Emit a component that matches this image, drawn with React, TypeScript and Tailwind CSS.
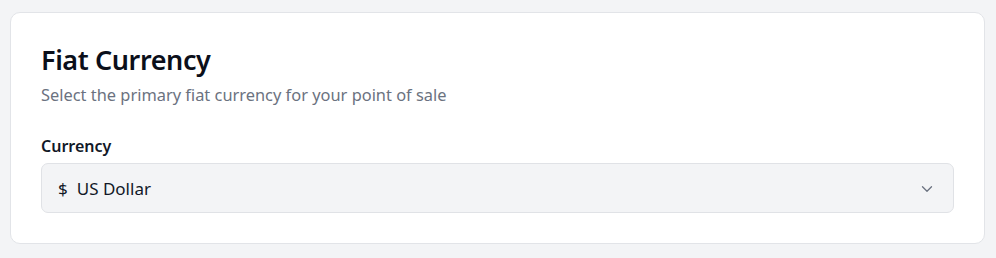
import { ChevronDown } from "lucide-react";

export default function App() {
  return (
    <div
      className="min-h-[258px] bg-[#f3f4f6] pt-3 pl-[10px] pr-[11px]"
      style={{ fontFamily: '"Noto Sans", "Open Sans", sans-serif' }}
    >
      <div className="rounded-[10px] border border-[#e2e4e8] bg-white px-[30px] pt-[27px] pb-[30px]">
        <h2 className="text-[27px] font-semibold leading-[40px] tracking-[-0.4px] text-[#0b0f1a]">
          Fiat Currency
        </h2>
        <p className="mt-[3px] text-[16.4px] leading-[24px] text-[#6b7280]">
          Select the primary fiat currency for your point of sale
        </p>
        <div className="mt-[27px]">
          <label className="block text-[16px] font-semibold leading-[24px] text-[#111827]">
            Currency
          </label>
          <button className="mt-[5px] flex h-[50px] w-full items-center rounded-[7px] border border-[#e0e2e6] bg-[#f3f4f6] pl-[16px] pr-[17px] pt-[1px] text-left">
            <span className="text-[17px] text-[#111827]">$</span>
            <span className="ml-[9px] flex-1 text-[17px] text-[#111827]">US Dollar</span>
            <ChevronDown className="h-[18px] w-[18px] text-[#6b7280]" strokeWidth={1.75} />
          </button>
        </div>
      </div>
    </div>
  );
}
